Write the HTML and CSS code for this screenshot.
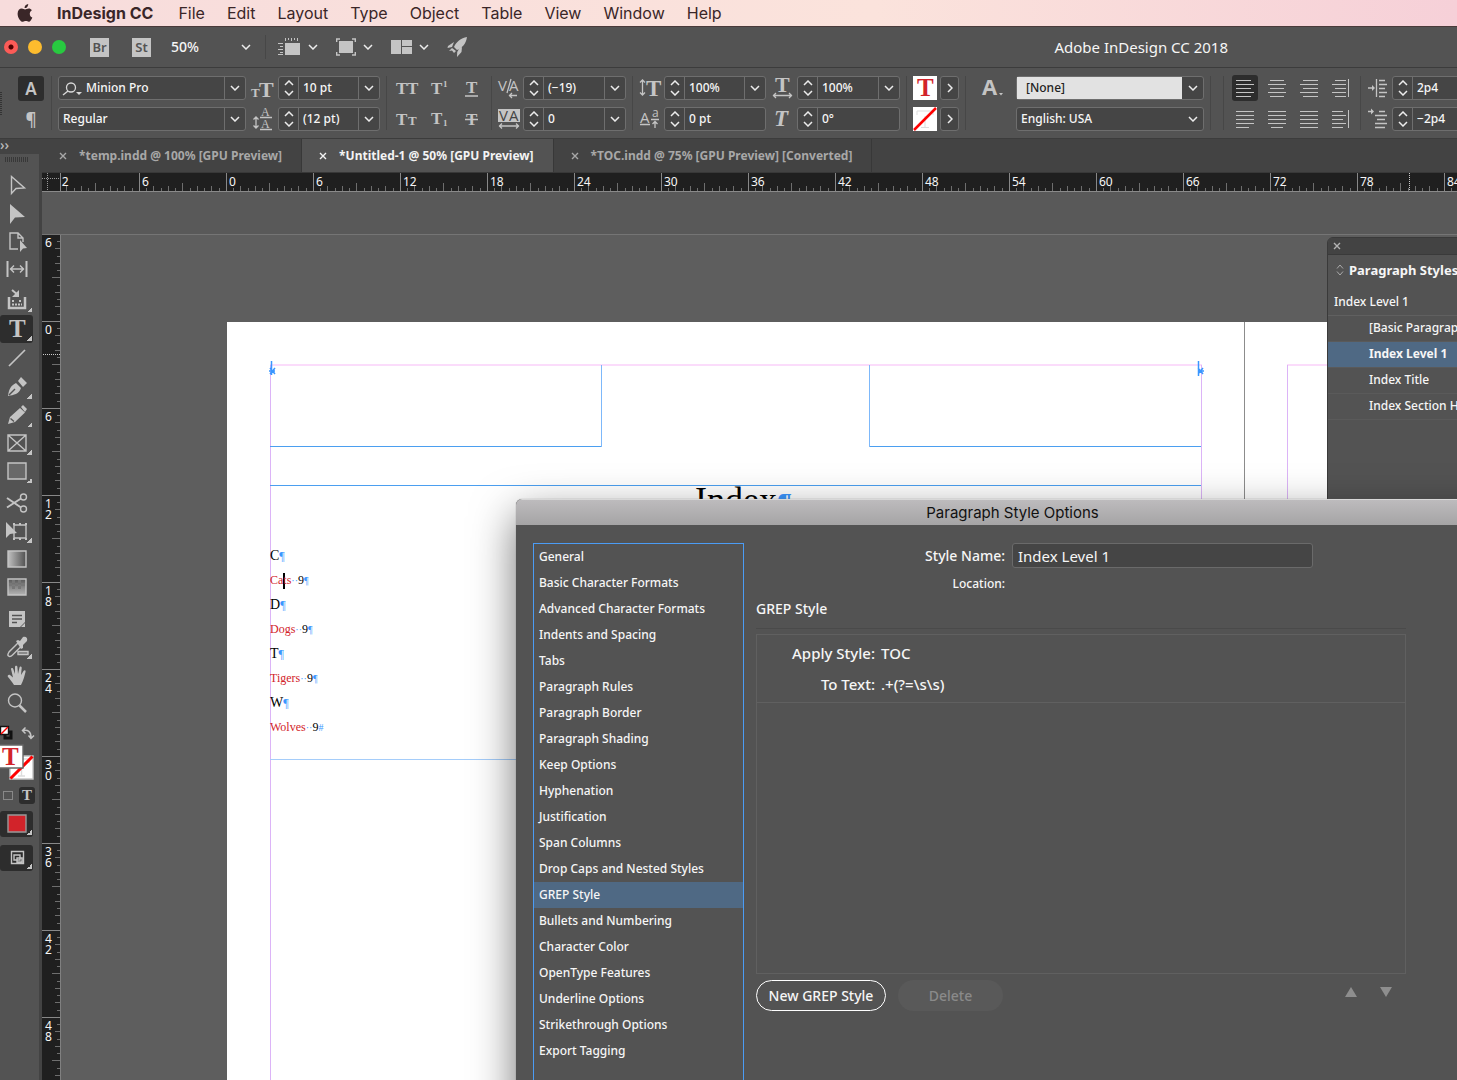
FILE: index.html
```html
<!DOCTYPE html>
<html lang="en">
<head>
<meta charset="utf-8">
<title>Adobe InDesign CC 2018</title>
<link rel="stylesheet" href="styles.css">
</head>
<body>
<svg class="sprite" aria-hidden="true">
  <symbol id="chev" viewBox="0 0 10 6"><path d="M1 1l4 4 4-4" fill="none" stroke="#ececec" stroke-width="1.5"/></symbol>
  <symbol id="chev-up" viewBox="0 0 10 6"><path d="M1 5l4-4 4 4" fill="none" stroke="#ececec" stroke-width="1.5"/></symbol>
  <symbol id="chev-right" viewBox="0 0 6 10"><path d="M1 1l4 4-4 4" fill="none" stroke="#ececec" stroke-width="1.5"/></symbol>
  <symbol id="close" viewBox="0 0 8 8"><path d="M1 1l6 6M7 1l-6 6" fill="none" stroke="currentColor" stroke-width="1.4"/></symbol>
</svg>

<nav class="menubar" aria-label="Application menu">
  <svg class="apple" viewBox="0 0 16 18" aria-label="Apple"><path d="M11.2 0c.1 1.100-.3 2.100-1 2.900-.7.800-1.600 1.300-2.600 1.200-.1-1 .4-2.100 1-2.800C9.300.6 10.300.1 11.200 0zM14.900 6.200c-1.500 1-2.200 2.200-2.100 3.700 0 1.700 1 3 2.500 3.600-.4 1.200-1.800 4.200-3.500 4.300-1.100 0-1.600-.7-2.900-.7-1.400 0-1.800.7-2.900.7C3.500 17.900.6 13.700.6 9.700c0-3.300 2-5.200 4.200-5.200 1.300 0 2.400.9 3.300.9.800 0 2.200-1 3.800-1 .9 0 2.200.5 3 1.800z"/></svg>
  <a href="#" class="app-name">InDesign CC</a>
  <a href="#">File</a><a href="#">Edit</a><a href="#">Layout</a><a href="#">Type</a><a href="#">Object</a><a href="#">Table</a><a href="#">View</a><a href="#">Window</a><a href="#">Help</a>
</nav>

<header class="appbar">
  <div class="lights">
    <button class="light red" aria-label="Close"></button><button class="light yellow" aria-label="Minimize"></button><button class="light green" aria-label="Zoom"></button>
  </div>
  <button class="badge">Br</button>
  <button class="badge">St</button>
  <div class="zoom"><select aria-label="Zoom level"><option>50%</option></select><svg class="chev"><use href="#chev"/></svg></div>
  <div class="view-tools">
    <button aria-label="View options"><svg width="24" height="18" viewBox="0 0 24 18"><path d="M8 5h15v12H8z" fill="#c4c4c4"/><path d="M8.500 0v3M11.500 0v2M14.500 0v3M17.500 0v2M20.500 0v3M1 5.500h5M3 8.500h3M1 11.500h5M3 14.500h3M1 16.500h5" stroke="#c4c4c4"/></svg><svg class="chev"><use href="#chev"/></svg></button>
    <button aria-label="Screen mode"><svg width="20" height="18" viewBox="0 0 20 18"><path d="M3 3h14v12H3z" fill="#c4c4c4"/><path d="M.7 4V1H4M16 1h3.300v3M.7 14v3H4M16 17h3.300v-3" fill="none" stroke="#c4c4c4" stroke-width="1.400"/></svg><svg class="chev"><use href="#chev"/></svg></button>
    <button aria-label="Arrange documents"><svg width="21" height="18" viewBox="0 0 21 18"><path d="M0 2h10v14H0zM11 2h10v6H11zM11 9h10v7H11z" fill="#c4c4c4"/></svg><svg class="chev"><use href="#chev"/></svg></button>
    <button aria-label="GPU performance"><svg width="20" height="20" viewBox="0 0 20 20"><path d="M20 0c-6 1-11 5-13 10l3 3c5-2 9-6 10-13zM7 5L1 9l-.500 2L5 10zM12 12l3-2-.500 5L10 20l.200-5zM5 11L2 14l3-.500L7 16l2-2z" fill="#c4c4c4"/></svg></button>
  </div>
  <h1>Adobe InDesign CC 2018</h1>
</header>

<section class="control" aria-label="Control panel">
  <div class="mode">
    <button class="on" aria-label="Character formatting">A</button>
    <button aria-label="Paragraph formatting">¶</button>
  </div>
  <i class="sep"></i>
  <div class="grp font">
    <div class="field search"><svg class="lens" width="20" height="14" viewBox="0 0 20 14"><circle cx="9" cy="5.500" r="4.500" fill="none" stroke="#d8d8d8" stroke-width="1.300"/><path d="M6 9l-5 4" stroke="#d8d8d8" stroke-width="1.500"/><path d="M14 10h6l-3 3z" fill="#d8d8d8"/></svg><input aria-label="Font family" value="Minion Pro"><button class="drop" aria-label="Font families"><svg class="chev"><use href="#chev"/></svg></button></div>
    <svg class="ic" viewBox="0 0 22 22"><text x="0" y="20" font-size="13">T</text><text x="8" y="20" font-size="22">T</text></svg>
    <div class="field"><span class="step"><button aria-label="Increase"><svg class="chev"><use href="#chev-up"/></svg></button><button aria-label="Decrease"><svg class="chev"><use href="#chev"/></svg></button></span><input aria-label="Font size" value="10 pt"><button class="drop" aria-label="Font sizes"><svg class="chev"><use href="#chev"/></svg></button></div>
    <div class="pick split"><select aria-label="Font style"><option>Regular</option></select><svg class="chev"><use href="#chev"/></svg></div>
    <svg class="ic" viewBox="0 0 22 22"><path d="M5 9v11M2.500 11.500L5 9l2.500 2.500M2.500 17.500L5 20l2.500-2.500M9 9.500h12M9 21.500h12"/><text x="10" y="8" class="thin" font-size="12">A</text><text x="10" y="20" class="thin" font-size="12">A</text></svg>
    <div class="field"><span class="step"><button aria-label="Increase"><svg class="chev"><use href="#chev-up"/></svg></button><button aria-label="Decrease"><svg class="chev"><use href="#chev"/></svg></button></span><input aria-label="Leading" value="(12 pt)"><button class="drop" aria-label="Leading values"><svg class="chev"><use href="#chev"/></svg></button></div>
  </div>
  <i class="sep"></i>
  <div class="grp caps">
    <button aria-label="All caps"><svg class="ic" viewBox="0 0 22 22"><text x="0" y="17" font-size="17">T</text><text x="11" y="17" font-size="17">T</text></svg></button>
    <button aria-label="Superscript"><svg class="ic" viewBox="0 0 22 22"><text x="3" y="17" font-size="17">T</text><text x="15" y="10" font-size="9">1</text></svg></button>
    <button aria-label="Underline"><svg class="ic" viewBox="0 0 22 22"><text x="6" y="16" font-size="17">T</text><path d="M5 19h13" stroke-width="1.500"/></svg></button>
    <button aria-label="Small caps"><svg class="ic" viewBox="0 0 22 22"><text x="0" y="17" font-size="17">T</text><text x="12" y="17" font-size="13">T</text></svg></button>
    <button aria-label="Subscript"><svg class="ic" viewBox="0 0 22 22"><text x="3" y="16" font-size="17">T</text><text x="15" y="18" font-size="9">1</text></svg></button>
    <button aria-label="Strikethrough"><svg class="ic" viewBox="0 0 22 22"><text x="6" y="17" font-size="17">T</text><path d="M5 11.500h13" stroke-width="1.500"/></svg></button>
  </div>
  <i class="sep"></i>
  <div class="grp pair">
    <svg class="ic" viewBox="0 0 22 22"><path d="M9 16L13 2M11 18.500h8M14 16l-2.500 2.500L14 21"/><text x="0" y="14" class="sans" font-size="15">V</text><text x="11" y="14" class="sans" font-size="15">A</text></svg>
    <div class="field"><span class="step"><button aria-label="Increase"><svg class="chev"><use href="#chev-up"/></svg></button><button aria-label="Decrease"><svg class="chev"><use href="#chev"/></svg></button></span><input aria-label="Kerning" value="(−19)"><button class="drop" aria-label="Kerning values"><svg class="chev"><use href="#chev"/></svg></button></div>
    <svg class="ic" viewBox="0 0 22 22"><path d="M0 1h22v13H0z" fill="#c4c4c4" stroke="none"/><text x="1" y="13" class="sans dark" font-size="15">V</text><text x="11" y="13" class="sans dark" font-size="15">A</text><path d="M1 18h20M4 15.500L1.500 18 4 20.500M18 15.500l2.500 2.500-2.500 2.500"/></svg>
    <div class="field"><span class="step"><button aria-label="Increase"><svg class="chev"><use href="#chev-up"/></svg></button><button aria-label="Decrease"><svg class="chev"><use href="#chev"/></svg></button></span><input aria-label="Tracking" value="0"><button class="drop" aria-label="Tracking values"><svg class="chev"><use href="#chev"/></svg></button></div>
  </div>
  <i class="sep"></i>
  <div class="grp scale">
    <svg class="ic" viewBox="0 0 22 22"><path d="M3.500 3v15M1 5.500L3.500 3 6 5.500M1 15.500L3.500 18 6 15.500"/><text x="7" y="19" font-size="23">T</text></svg>
    <div class="field"><span class="step"><button aria-label="Increase"><svg class="chev"><use href="#chev-up"/></svg></button><button aria-label="Decrease"><svg class="chev"><use href="#chev"/></svg></button></span><input aria-label="Vertical scale" value="100%"><button class="drop" aria-label="Vertical scales"><svg class="chev"><use href="#chev"/></svg></button></div>
    <svg class="ic" viewBox="0 0 22 22"><text x="3" y="15" font-size="22">T</text><path d="M1 18.500h19M4 16l-2.500 2.500L4 21M17 16l2.500 2.500L17 21"/></svg>
    <div class="field"><span class="step"><button aria-label="Increase"><svg class="chev"><use href="#chev-up"/></svg></button><button aria-label="Decrease"><svg class="chev"><use href="#chev"/></svg></button></span><input aria-label="Horizontal scale" value="100%"><button class="drop" aria-label="Horizontal scales"><svg class="chev"><use href="#chev"/></svg></button></div>
    <svg class="ic" viewBox="0 0 22 22"><path d="M1 16.500h10M12 11.500h8M16 20v-6M13.500 16L16 13.500l2.500 2.500"/><text x="1" y="15" class="sans" font-size="15">A</text><text x="13" y="9" class="sans" font-size="12">a</text></svg>
    <div class="field"><span class="step"><button aria-label="Increase"><svg class="chev"><use href="#chev-up"/></svg></button><button aria-label="Decrease"><svg class="chev"><use href="#chev"/></svg></button></span><input aria-label="Baseline shift" value="0 pt"></div>
    <svg class="ic" viewBox="0 0 22 22"><text x="2" y="18" font-size="23" font-style="italic">T</text></svg>
    <div class="field"><span class="step"><button aria-label="Increase"><svg class="chev"><use href="#chev-up"/></svg></button><button aria-label="Decrease"><svg class="chev"><use href="#chev"/></svg></button></span><input aria-label="Skew" value="0°"></div>
  </div>
  <i class="sep"></i>
  <div class="grp paint">
    <button class="swatch" aria-label="Fill"><svg viewBox="0 0 24 24"><text x="4" y="20" font-size="25" class="fill">T</text></svg></button>
    <button class="more" aria-label="Fill options"><svg class="chev-r"><use href="#chev-right"/></svg></button>
    <button class="swatch" aria-label="Stroke"><svg viewBox="0 0 24 24"><path d="M4 8V4h16v4M12 9v11M8 20.500h8" fill="none" stroke="#ddd"/><path d="M1 23L23 1" stroke="#f00" stroke-width="2.500"/></svg></button>
    <button class="more" aria-label="Stroke options"><svg class="chev-r"><use href="#chev-right"/></svg></button>
  </div>
  <i class="sep"></i>
  <div class="grp charstyle">
    <svg class="ic" viewBox="0 0 22 22"><text x="0" y="18" class="sans heavy" font-size="22">A</text><path d="M17 16h4l-2 2.500z" fill="#c4c4c4" stroke="none"/></svg>
    <div class="pick split none"><select aria-label="Character style"><option>[None]</option></select><svg class="chev"><use href="#chev"/></svg></div>
    <span></span>
    <div class="pick"><select aria-label="Language"><option>English: USA</option></select><svg class="chev"><use href="#chev"/></svg></div>
  </div>
  <i class="sep"></i>
  <i class="sep"></i>
  <div class="grp align">
    <button class="on" aria-label="Align left"><svg viewBox="0 0 18 18"><path d="M0 1.500h15M0 5.500h18M0 9.500h15M0 13.500h18M0 17.500h15"/></svg></button>
    <button aria-label="Align center"><svg viewBox="0 0 18 18"><path d="M2 1.500h14M0 5.500h18M2 9.500h14M0 13.500h18M2 17.500h14"/></svg></button>
    <button aria-label="Align right"><svg viewBox="0 0 18 18"><path d="M3 1.500h15M0 5.500h18M3 9.500h15M0 13.500h18M3 17.500h15"/></svg></button>
    <button aria-label="Align away from spine"><svg viewBox="0 0 18 18"><path d="M3 1.500h11M0 5.500h14M3 9.500h11M0 13.500h14M3 17.500h11M16.500 0v18"/></svg></button>
    <button aria-label="Justify, last line left"><svg viewBox="0 0 18 18"><path d="M0 1.500h18M0 5.500h18M0 9.500h18M0 13.500h18M0 17.500h13"/></svg></button>
    <button aria-label="Justify, last line centered"><svg viewBox="0 0 18 18"><path d="M0 1.500h18M0 5.500h18M0 9.500h18M0 13.500h18M3 17.500h12"/></svg></button>
    <button aria-label="Justify all lines"><svg viewBox="0 0 18 18"><path d="M0 1.500h18M0 5.500h18M0 9.500h18M0 13.500h18M0 17.500h18"/></svg></button>
    <button aria-label="Align towards spine"><svg viewBox="0 0 18 18"><path d="M0 1.500h11M0 5.500h14M0 9.500h11M0 13.500h14M0 17.500h11M16.500 0v18"/></svg></button>
  </div>
  <i class="sep"></i>
  <div class="grp pair">
    <svg class="ic" viewBox="0 0 22 22"><path d="M1 11h6M9.500 2v18M12 3.500h6M12 7.500h8M12 11.500h6M12 15.500h8M12 19.500h6"/><path d="M5 8l3 3-3 3z" fill="#c4c4c4" stroke="none"/></svg>
    <div class="field"><span class="step"><button aria-label="Increase"><svg class="chev"><use href="#chev-up"/></svg></button><button aria-label="Decrease"><svg class="chev"><use href="#chev"/></svg></button></span><input aria-label="Left indent" value="2p4"></div>
    <svg class="ic" viewBox="0 0 22 22"><path d="M1 3.500h5M12 3.500h6M8 7.500h12M10 11.500h8M8 15.500h12M8 19.500h10"/><path d="M4 .500l3 3-3 3z" fill="#c4c4c4" stroke="none"/></svg>
    <div class="field"><span class="step"><button aria-label="Increase"><svg class="chev"><use href="#chev-up"/></svg></button><button aria-label="Decrease"><svg class="chev"><use href="#chev"/></svg></button></span><input aria-label="First line indent" value="−2p4"></div>
  </div>
</section>

<main class="workspace">
  <aside class="tools" aria-label="Tools">
    <div class="tools-head">››</div>
    <i class="grip"></i>
    <div class="tool-set">
      <button aria-label="Selection"><svg viewBox="0 0 22 22"><path d="M5.500 2.500v17l4.500-5 8.500-.500z" fill="none"/></svg></button>
      <button aria-label="Direct selection"><svg viewBox="0 0 22 22"><path class="f" d="M4 2v20l5-6.500 10-.500z"/></svg></button>
      <button aria-label="Page"><svg viewBox="0 0 22 22"><path d="M12 19H4V3h8l5 5v4M12 3v5h5" fill="none"/><path class="f" d="M14 10v12l3-3.500 4-.500z"/></svg></button>
      <button aria-label="Gap"><svg viewBox="0 0 22 22"><path d="M1.500 3v16M20.500 3v16" stroke-width="2"/><path d="M4 11h14M8 7.500L4.500 11 8 14.500M14 7.500l3.500 3.500-3.500 3.500" fill="none"/></svg></button>
    </div>
    <div class="tool-set tall">
      <button class="sub" aria-label="Content collector"><svg viewBox="0 0 22 22"><path d="M3 8v11h16V8" fill="none" stroke-width="2.500"/><path d="M6 12h3M13 12h3M6 15.500h10" stroke-dasharray="2 1" stroke-width="2"/><path d="M6 1l6 5" stroke-width="2"/><path class="f" d="M13 1v7H6z"/></svg></button>
      <button class="sub on" aria-label="Type"><svg viewBox="0 0 22 22"><text x="3" y="19" font-size="25">T</text></svg></button>
      <button aria-label="Line"><svg viewBox="0 0 22 22"><path d="M3 19L19 3" stroke-width="1.700"/></svg></button>
      <button class="sub" aria-label="Pen"><svg viewBox="0 0 22 22"><path class="f" d="M2 20c1-6 2-10 8-13l5 5c-2 6-7 7-13 8zM12 5l3-4 6 6-4 4z"/><path d="M3 19l6-6" stroke="#535353"/></svg></button>
    </div>
    <div class="tool-set">
      <button class="sub" aria-label="Pencil"><svg viewBox="0 0 22 22"><path class="f" d="M2 20l2-7L14 4l5 4.500L9 18zM15 3l2-2 4 4-2 3z"/><path d="M4.500 14.500l3.500 3" stroke="#535353"/></svg></button>
      <button class="sub" aria-label="Rectangle frame"><svg viewBox="0 0 22 22"><path d="M2 3h18v16H2zM2 3l18 16M20 3L2 19" fill="none"/></svg></button>
      <button class="sub" aria-label="Rectangle"><svg viewBox="0 0 22 22"><path d="M2 3h18v16H2z" fill="#696969"/></svg></button>
    </div>
    <div class="tool-set">
      <button aria-label="Scissors"><svg viewBox="0 0 22 22"><circle cx="17.500" cy="5" r="3" fill="none"/><circle cx="17.500" cy="17" r="3" fill="none"/><path d="M1 6l14 9.500M1 15.500L15 6.500" stroke-width="2"/></svg></button>
      <button class="sub" aria-label="Free transform"><svg viewBox="0 0 22 22"><path d="M8 5h12v13H8z" fill="none"/><path d="M7 4h2M13 4h2M19 4h2M7 19h2M13 19h2M19 19h2" stroke-width="2"/><path class="f" d="M0 2v16l4-4 7-1z"/></svg></button>
      <button aria-label="Gradient swatch"><svg viewBox="0 0 22 22"><defs><linearGradient id="ga"><stop offset="0" stop-color="#c0c0c0"/><stop offset="1" stop-color="#505050"/></linearGradient></defs><path d="M2 3h18v16H2z" fill="url(#ga)"/></svg></button>
      <button aria-label="Gradient feather"><svg viewBox="0 0 22 22"><defs><linearGradient id="gb" x2="0" y2="1"><stop offset="0" stop-color="#585858"/><stop offset="1" stop-color="#b4b4b4"/></linearGradient></defs><path d="M2 3h18v16H2z" fill="url(#gb)"/><path d="M6 5.500h3M12 5.500h3M3 8.500h3M9 8.500h3M15 8.500h4M6 11.500h3M12 11.500h3" stroke="#777" stroke-width="3"/></svg></button>
    </div>
    <div class="tool-set">
      <button aria-label="Note"><svg viewBox="0 0 22 22"><path class="f" d="M3 3h16v11l-5 5H3zM15 19l4-4v4z"/><path d="M6 7.500h10M6 11h10M6 14.500h5" stroke="#535353"/></svg></button>
      <button class="sub" aria-label="Color theme"><svg viewBox="0 0 22 22"><path d="M12 7L3 16c-1 2-2 3-.500 4s3 0 4-1l9-9" fill="none"/><path class="f" d="M10 5l2-1 2 1 3-4c3-1 5 1 4 4l-4 4v3l-2 1z"/><path d="M12 15.500h10v3H12z" fill="#777"/></svg></button>
      <button aria-label="Hand"><svg viewBox="0 0 22 22"><path class="f" d="M8 21c-2-3-4-6-6-8-1-1 .500-3 2-2l3 2.500L5 5c0-1.500 2-1.500 2.300 0L9 10V3c0-1.600 2.300-1.600 2.400 0l.600 7 1.500-6.500c.400-1.500 2.300-1 2.200.500L15 11l2.500-4c1-1.300 2.500-.500 2 1-1 4-2 8-4.500 13z"/></svg></button>
      <button aria-label="Zoom"><svg viewBox="0 0 22 22"><circle cx="9" cy="8.500" r="6.500" fill="none"/><path d="M13.500 13.500l6.500 6.500" stroke-width="2.500"/></svg></button>
    </div>
    <div class="defaults">
      <button aria-label="Default fill and stroke"><svg width="14" height="14" viewBox="0 0 14 14"><path d="M5 6h6v6H5z" fill="none" stroke="#111" stroke-width="3"/><path d="M.500.500h8v8h-8z" fill="#fff" stroke="#111"/><path d="M1 8l7-7" stroke="#f00" stroke-width="1.500"/></svg></button>
      <button aria-label="Swap fill and stroke"><svg width="14" height="14" viewBox="0 0 14 14"><path d="M2 4.500c5-1 8 1 8 7M4.500 1.500l-3 3 3 3M7.500 9.500l2.500 3 3-3" fill="none" stroke="#c4c4c4" stroke-width="1.500"/></svg></button>
    </div>
    <svg class="colors" viewBox="0 0 34 36" role="img" aria-label="Fill and stroke"><path d="M10 11h23v23H10z" fill="#fff"/><path d="M14 14h15v4M18 31h7M21.500 24v7" fill="none" stroke="#ddd"/><path d="M10.500 33.500L32.500 11.500" stroke="#f00" stroke-width="3"/><path d="M-1 0h24v23H-1z" fill="#fff" stroke="#666"/><text x="2" y="20" font-size="25" class="fill">T</text></svg>
    <div class="affects">
      <button aria-label="Formatting affects container"><i></i></button>
      <button class="on" aria-label="Formatting affects text">T</button>
    </div>
    <div class="applies">
      <button class="sub on" aria-label="Apply color"><svg viewBox="0 0 22 22"><path d="M2 2h18v17H2z" fill="#d2232a" stroke="#999"/></svg></button>
      <button class="sub on" aria-label="Screen mode"><svg viewBox="0 0 22 22"><path d="M5.500 4.500h12v12h-12zM8 8h6v5H8zM11 11h5v4h-5z" fill="none"/></svg></button>
    </div>
  </aside>

  <section class="document">
    <div class="tabs" role="tablist">
      <div class="tab"><button aria-label="Close tab"><svg><use href="#close"/></svg></button><a href="#" role="tab">*temp.indd @ 100% [GPU Preview]</a></div>
      <div class="tab active"><button aria-label="Close tab"><svg><use href="#close"/></svg></button><a href="#" role="tab">*Untitled-1 @ 50% [GPU Preview]</a></div>
      <div class="tab"><button aria-label="Close tab"><svg><use href="#close"/></svg></button><a href="#" role="tab">*TOC.indd @ 75% [GPU Preview] [Converted]</a></div>
    </div>
    <div class="hruler">
      <div class="corner"><svg viewBox="0 0 18 18"><path d="M5.500 0v18M0 5.500h18" stroke="#999" stroke-dasharray="1 1"/></svg></div>
      <div class="ruler-body">
        <svg class="ticks"><defs><pattern id="h" x="-9" y="0" width="87" height="18" patternUnits="userSpaceOnUse"><path d="M.500 0v18" stroke="#888"/><path d="M7.500 15v3M14.500 13v5M22.500 15v3M29.500 13v5M36.500 15v3M43.500 10v8M51.500 15v3M58.500 13v5M65.500 15v3M72.500 13v5M80.500 15v3" stroke="#6e6e6e"/></pattern></defs><rect width="100%" height="18" fill="url(#h)"/><path d="M1348.500 0v18" stroke="#ccc" stroke-dasharray="1 1"/></svg>
        <ol><li>12</li><li>6</li><li>0</li><li>6</li><li>12</li><li>18</li><li>24</li><li>30</li><li>36</li><li>42</li><li>48</li><li>54</li><li>60</li><li>66</li><li>72</li><li>78</li><li>84</li></ol>
      </div>
    </div>
    <div class="gutter"></div>
    <div class="stage">
      <div class="vruler">
        <svg class="ticks"><defs><pattern id="v" x="0" y="-1" width="18" height="87" patternUnits="userSpaceOnUse"><path d="M0 .500h18" stroke="#888"/><path d="M15 7.500h3M13 14.500h5M15 22.500h3M13 29.500h5M15 36.500h3M10 43.500h8M15 51.500h3M13 58.500h5M15 65.500h3M13 72.500h5M15 80.500h3" stroke="#6e6e6e"/></pattern></defs><rect width="18" height="100%" fill="url(#v)"/><path d="M1 119.500h17" stroke="#ccc" stroke-dasharray="1 1"/></svg>
        <ol><li>6</li><li>0</li><li>6</li><li>12</li><li>18</li><li>24</li><li>30</li><li>36</li><li>42</li><li>48</li></ol>
      </div>
      <div class="canvas">
        <article class="page">
          <svg class="guides" aria-hidden="true">
            <path d="M43 43h932M1060 43h400" stroke="#fbdcfb" stroke-width="2"/>
            <path d="M43.500 43v900M974.500 43v900M1060.500 43v900" stroke="#dcb4f7"/>
            <path d="M1017.500 0v900" stroke="#8c8c8c"/>
            <path d="M43 124.500h331M642 124.500h332M43 163.500h931" stroke="#4b9ff0"/>
            <path d="M374.500 43v82M642.500 43v82" stroke="#7db8fa"/>
            <path d="M43 437.500h931" stroke="#a5cdfa"/>
            <path d="M44.500 39v14M971.500 39v15M42 49h6M43 46l5 6M48 46l-5 6M971 49h6M971 46l5 6M976 46l-5 6" stroke="#3a96ff" stroke-width="1.500"/>
          </svg>
          <h2>Index<b>¶</b></h2>
          <dl>
            <dt>C<b>¶</b></dt><dd>Ca<i class="caret"></i>ts<b>··</b><em>9</em><b>¶</b></dd>
            <dt>D<b>¶</b></dt><dd>Dogs<b>··</b><em>9</em><b>¶</b></dd>
            <dt>T<b>¶</b></dt><dd>Tigers<b>··</b><em>9</em><b>¶</b></dd>
            <dt>W<b>¶</b></dt><dd>Wolves<b>··</b><em>9</em><b>#</b></dd>
          </dl>
        </article>
      </div>
    </div>
  </section>
</main>

<aside class="styles-panel" aria-label="Paragraph Styles">
  <div class="panel-bar"><button aria-label="Close panel"><svg><use href="#close"/></svg></button></div>
  <h2><svg width="8" height="12" viewBox="0 0 8 12"><path d="M1 4.500L4 1l3 3.500M1 7.500L4 11l3-3.500" fill="none" stroke="#aaa"/></svg>Paragraph Styles</h2>
  <p>Index Level 1</p>
  <ul><li>[Basic Paragraph]</li><li class="on">Index Level 1</li><li>Index Title</li><li>Index Section Head</li></ul>
</aside>

<section class="dialog" role="dialog" aria-labelledby="dlg-title">
  <h2 id="dlg-title">Paragraph Style Options</h2>
  <div class="dialog-body">
    <ul class="cats">
      <li>General</li><li>Basic Character Formats</li><li>Advanced Character Formats</li><li>Indents and Spacing</li><li>Tabs</li><li>Paragraph Rules</li><li>Paragraph Border</li><li>Paragraph Shading</li><li>Keep Options</li><li>Hyphenation</li><li>Justification</li><li>Span Columns</li><li>Drop Caps and Nested Styles</li><li class="on">GREP Style</li><li>Bullets and Numbering</li><li>Character Color</li><li>OpenType Features</li><li>Underline Options</li><li>Strikethrough Options</li><li>Export Tagging</li>
    </ul>
    <div class="pane">
      <div class="name-row"><label for="style-name">Style Name:</label><input id="style-name" value="Index Level 1"></div>
      <div class="loc-row"><span>Location:</span></div>
      <h3>GREP Style</h3>
      <div class="grep">
        <dl><dt>Apply Style:</dt><dd>TOC</dd><dt>To Text:</dt><dd>.+(?=\s\s)</dd></dl>
      </div>
      <div class="actions">
        <button class="primary">New GREP Style</button>
        <button class="ghost" disabled>Delete</button>
        <button class="arrow up" aria-label="Move up"><svg viewBox="0 0 12 10"><path d="M6 0l6 10H0z" fill="#8e8e8e"/></svg></button>
        <button class="arrow" aria-label="Move down"><svg viewBox="0 0 12 10"><path d="M0 0h12L6 10z" fill="#8e8e8e"/></svg></button>
      </div>
    </div>
  </div>
</section>
</body>
</html>
```
FILE: styles.css
```css
* { box-sizing: border-box; }
body {
  margin: 0;
  height: 100vh;
  position: relative;
  overflow: hidden;
  display: flex;
  flex-direction: column;
  background: #535353;
  color: #f6f6f6;
  font: 500 12px/16px "Noto Sans", "Open Sans", sans-serif;
}
button, input, select { font: inherit; color: inherit; margin: 0; padding: 0; border: 0; background: none; border-radius: 0; }
button { display: flex; align-items: center; justify-content: center; flex: none; }
select { appearance: none; }
ul, ol, dl, dd, h1, h2, h3, p { margin: 0; padding: 0; list-style: none; font-weight: 500; }
a { color: inherit; text-decoration: none; }
.sprite { display: none; }
.chev { width: 10px; height: 6px; flex: none; }
.chev-r { width: 6px; height: 10px; }

/* menu bar */
.menubar {
  flex: none;
  height: 27px;
  display: flex;
  align-items: center;
  gap: 22px;
  padding-left: 17px;
  background: linear-gradient(90deg, #f7dcdc, #fbe3dc 60%, #f6d0d8);
  border-bottom: 1px solid #4a3a3a;
  color: #3a2628;
  font: 16px/26px Inter, Roboto, sans-serif;
}
.apple { width: 16px; height: 18px; fill: #3a2628; }
.app-name { font-weight: 700; margin: 0 3px 0 2px; }

/* application bar */
.appbar { flex: none; height: 41px; display: flex; align-items: center; border-bottom: 1px solid #3c3c3c; }
.lights { display: flex; gap: 10px; padding-left: 4px; margin-right: 24px; }
.light { width: 14px; height: 14px; border-radius: 50%; }
.red { background: radial-gradient(circle, #4d0000 2px, #fc5b57 3px); }
.yellow { background: #fdbc2e; }
.green { background: #28c940; }
.badge { width: 19px; height: 19px; background: #c4c4c4; color: #535353; font-weight: 600; font-size: 13px; margin-right: 23px; }
.zoom { width: 80px; display: flex; align-items: center; font-size: 14px; margin-right: 14px; margin-left: -3px; }
.zoom select { flex: 1; min-width: 0; }
.view-tools { display: flex; align-items: center; gap: 18px; height: 24px; border-left: 1px solid #474747; padding-left: 11px; }
.view-tools button { gap: 12px; }
.view-tools button .chev { margin-left: -5px; }
.appbar h1 { font-size: 15px; line-height: 20px; font-weight: 400; margin-left: auto; margin-right: 229px; }

/* control panel */
.control { flex: none; height: 71px; display: flex; align-items: flex-start; padding-top: 8px; border-bottom: 1px solid #3c3c3c; overflow: hidden; }
.control::before { content: ""; width: 2px; height: 24px; margin: 16px 16px 0 0; background: repeating-linear-gradient(#333 0 1px, #535353 1px 2px); flex: none; }
.sep { flex: none; width: 1px; height: 54px; margin: 0 6px; background: #474747; }
.mode { display: grid; grid-template-rows: 25px 25px; gap: 6px; margin-right: 1px; color: #c4c4c4; }
.mode button { width: 26px; font-size: 17px; font-weight: 600; }
.mode .on, .align .on { background: #2d2d2d; border-radius: 3px; }
.grp { flex: none; display: grid; grid-auto-rows: 24px; row-gap: 7px; column-gap: 3px; align-items: center; }
.font { grid-template-columns: 188px 22px 102px; column-gap: 5px; }
.caps { grid-template-columns: repeat(3, 22px); column-gap: 10px; padding: 0 3px; }
.pair { grid-template-columns: 22px 103px; }
.scale { grid-template-columns: 22px 102px 25px 103px; }
.scale > .ic:nth-child(4n + 3) { margin-left: 3px; }
.paint { grid-template-columns: 24px 19px; }
.charstyle { grid-template-columns: 22px 188px; column-gap: 12px; padding-left: 10px; }
.align { grid-template-columns: repeat(4, 26px); column-gap: 6px; padding-left: 2px; }
.align button { height: 26px; }
.align svg { width: 18px; height: 18px; stroke: #c4c4c4; overflow: visible; }
.ic { width: 22px; height: 22px; fill: none; stroke: #c4c4c4; stroke-width: 1.3; overflow: visible; }
.ic text, .tools text, .swatch text { stroke: none; fill: #c4c4c4; font-family: "Liberation Serif", serif; font-weight: 700; }
.ic .thin { font-weight: 400; }
.ic .sans { font-family: "Open Sans", sans-serif; font-weight: 400; }
.ic .heavy { font-weight: 700; }
.ic .dark { fill: #444; }
.tools .fill, .swatch .fill { fill: #d2232a; }
.field, .pick { height: 24px; border: 1px solid #6e6e6e; border-radius: 3px; background: #454545; display: flex; min-width: 0; }
.field input { flex: 1; min-width: 0; width: 0; padding-left: 4px; }
.step { width: 20px; flex: none; border-right: 1px solid #6e6e6e; display: flex; flex-direction: column; justify-content: space-evenly; align-items: center; }
.drop { width: 21px; border-left: 1px solid #6e6e6e; }
.lens { margin: 5px 0 0 3px; flex: none; }
.pick { display: grid; grid-template-columns: 1fr 21px; align-items: center; }
.pick select { grid-area: 1 / 1 / 2 / 3; height: 22px; padding-left: 4px; }
.pick .chev { grid-area: 1 / 2; justify-self: center; pointer-events: none; }
.split select { background: linear-gradient(#6e6e6e, #6e6e6e) right 20px top / 1px 100% no-repeat; }
.none select { color: #222; padding-left: 9px; background: linear-gradient(90deg, #e2e2e2, #e2e2e2) left / calc(100% - 21px) 100% no-repeat; }
.swatch { width: 24px; height: 24px; background: #fff; }
.swatch svg { width: 24px; height: 24px; overflow: visible; }
.more { width: 19px; height: 24px; border: 1px solid #6e6e6e; border-radius: 3px; background: #454545; }

/* tools */
.workspace { flex: 1; min-height: 0; display: flex; }
.tools { width: 42px; flex: none; border-right: 3px solid #434343; display: flex; flex-direction: column; align-items: flex-start; }
.tools-head { width: 39px; height: 15px; background: #434343; color: #bbb; font-size: 14px; line-height: 11px; flex: none; }
.grip { width: 23px; height: 5px; margin: 3px 0 9px 5px; background: repeating-linear-gradient(90deg, #383838 0 1px, #535353 1px 2px); flex: none; }
.tool-set { display: flex; flex-direction: column; margin-bottom: 4px; }
.tool-set.tall { gap: 1px; margin: -1px 0 0; }
.tool-set button { width: 33px; height: 28px; }
.tools svg { width: 22px; height: 22px; stroke: #c4c4c4; stroke-width: 1.4; overflow: visible; }
.tools .f { fill: #c4c4c4; stroke: none; }
.tools .on { background: #2d2d2d; border-radius: 3px; }
.sub { background: linear-gradient(135deg, transparent 50%, #c4c4c4 50%) right 1px bottom 2px / 5px 5px no-repeat; }
.tools .sub.on { background: linear-gradient(135deg, transparent 50%, #c4c4c4 50%) right 1px bottom 2px / 5px 5px no-repeat #2d2d2d; }
.defaults { display: flex; gap: 7px; height: 24px; align-items: center; }
.tools .defaults svg { width: 14px; height: 14px; }
.tools .colors { width: 34px; height: 36px; flex: none; }
.affects { display: flex; align-items: center; gap: 6px; margin: 6px 0 7px 3px; color: #c4c4c4; font: 700 15px/17px "Liberation Serif", serif; }
.affects button { width: 16px; height: 17px; }
.affects button:first-child { width: 10px; }
.affects i { width: 10px; height: 9px; border: 1px solid #888; }
.applies { display: flex; flex-direction: column; gap: 8px; }
.applies button { width: 33px; height: 26px; }

/* document */
.document { flex: 1; min-width: 0; display: flex; flex-direction: column; }
.tabs { flex: none; height: 34px; display: flex; background: #434343; border-bottom: 1px solid #383838; }
.tab { display: flex; align-items: center; gap: 12px; padding: 0 19px 0 17px; border-right: 1px solid #383838; color: #a8a8a8; font-weight: 700; white-space: nowrap; }
.tab svg, .panel-bar svg { width: 8px; height: 8px; }
.active { background: #535353; color: #f4f4f4; }
.hruler { flex: none; height: 19px; display: flex; background: #1f1f1f; border-bottom: 1px solid #8a8a8a; overflow: hidden; }
.corner { width: 19px; flex: none; border-right: 1px solid #888; }
.corner svg { width: 18px; height: 18px; }
.ruler-body, .vruler { display: grid; flex: 1; min-width: 0; overflow: hidden; font: 12px/17px "Noto Sans", sans-serif; }
.ticks, .ruler-body ol, .vruler ol { grid-area: 1 / 1; }
.ticks { width: 100%; height: 100%; min-height: 18px; }
.ruler-body ol { display: flex; margin-left: -9px; }
.ruler-body li { width: 87px; flex: none; padding-left: 3px; font-weight: 400; }
.gutter { flex: none; height: 43px; background: #595959; border-bottom: 1px solid #757575; }
.stage { flex: 1; min-height: 0; display: flex; }
.vruler { flex: none; width: 19px; background: #1f1f1f; border-right: 1px solid #808080; line-height: 11px; }
.vruler li { height: 87px; width: 8px; margin-left: 3px; word-break: break-all; font-weight: 400; }
.vruler ol { padding-top: 2px; }
.canvas { flex: 1; position: relative; overflow: hidden; background: #5e5e5e; }
.page { position: absolute; left: 166px; top: 87px; right: 0; bottom: 0; background: #fff; color: #000; font-family: "Liberation Serif", serif; font-weight: 400; overflow: hidden; }
.guides { position: absolute; inset: 0; width: 100%; height: 100%; }
.page b { color: #3a96ff; font-weight: 400; }
.page h2 { position: absolute; left: 468px; top: 158px; font-size: 36px; line-height: 40px; font-weight: 400; }
.page h2 b { font-size: 28px; font-weight: 700; }
.page dl { position: absolute; left: 43px; top: 221px; font-size: 12px; }
.page dt { font-size: 14px; line-height: 25px; height: 25px; }
.page dd { line-height: 24px; height: 24px; color: #d2232a; }
.page dt b { font-size: 12px; }
.page dd b { font-size: 10px; }
.page em { font-style: normal; color: #000; }
.caret { display: inline-block; width: 2px; height: 16px; margin-right: -2px; background: #000; vertical-align: middle; }

/* floating paragraph styles panel */
.styles-panel { position: absolute; top: 237px; right: -80px; width: 210px; height: 400px; background: #535353; border: 1px solid #3a3a3a; border-radius: 6px 0 0 0; white-space: nowrap; overflow: hidden; }
.panel-bar { height: 17px; background: #434343; display: flex; align-items: center; padding-left: 5px; color: #b4b4b4; border-bottom: 1px solid #3a3a3a; }
.styles-panel h2 { font-size: 13px; font-weight: 700; line-height: 30px; display: flex; align-items: center; gap: 5px; padding-left: 8px; }
.styles-panel p { line-height: 33px; height: 31px; padding-left: 6px; border-bottom: 1px solid #606060; }
.styles-panel li { height: 26px; line-height: 24px; padding-left: 41px; border-bottom: 1px solid #5a5a5a; }
.styles-panel .on { background: #4f6984; font-weight: 700; }

/* paragraph style options */
.dialog { position: absolute; left: 516px; right: -52px; top: 499px; bottom: -40px; display: flex; flex-direction: column; background: #535353; border-radius: 6px 6px 0 0; box-shadow: 0 16px 44px rgba(0, 0, 0, .55), 0 0 1px #777; overflow: clip; }
.dialog > h2 { flex: none; height: 26px; text-align: center; color: #111; background: linear-gradient(#bdbbbd, #a5a4a5); border-top: 1px solid #d8d8d8; font: 15px/26px Inter, Roboto, sans-serif; }
.dialog-body { flex: 1; display: flex; padding: 18px 103px 0 17px; gap: 12px; }
.cats { width: 211px; flex: none; border: 1px solid #4b9cf5; }
.cats li { line-height: 26px; height: 26px; padding-left: 5px; }
.cats .on { background: #4f6984; }
.pane { flex: 1; min-width: 0; font-size: 14px; }
.name-row { display: grid; grid-template-columns: 249px 301px; column-gap: 7px; align-items: center; }
.name-row label, .loc-row span { text-align: right; }
.name-row input { height: 25px; border: 1px solid #6a6a6a; border-radius: 3px; background: #454545; padding-left: 5px; font-size: 15px; font-weight: 400; }
.loc-row { width: 249px; text-align: right; font-size: 12px; line-height: 32px; }
.pane h3 { font-size: 14px; line-height: 18px; padding-bottom: 10px; border-bottom: 1px solid #4a4a4a; margin-bottom: 5px; }
.grep { height: 340px; border: 1px solid #606060; }
.grep dl { display: grid; grid-template-columns: 118px 1fr; column-gap: 6px; font-size: 15px; line-height: 31px; padding: 3px 0 2px; border-bottom: 1px solid #606060; }
.grep dt { text-align: right; }
.actions { display: flex; align-items: center; gap: 12px; padding-top: 6px; }
.actions .primary { width: 130px; height: 31px; border: 1px solid #fff; border-radius: 16px; }
.actions .ghost { width: 105px; height: 31px; border-radius: 16px; background: #595959; color: #8a8a8a; }
.arrow { width: 12px; height: 20px; padding-bottom: 8px; margin-right: 14px; }
.arrow.up { margin-left: auto; margin-right: 11px; }
.arrow svg { width: 12px; height: 10px; }
```
